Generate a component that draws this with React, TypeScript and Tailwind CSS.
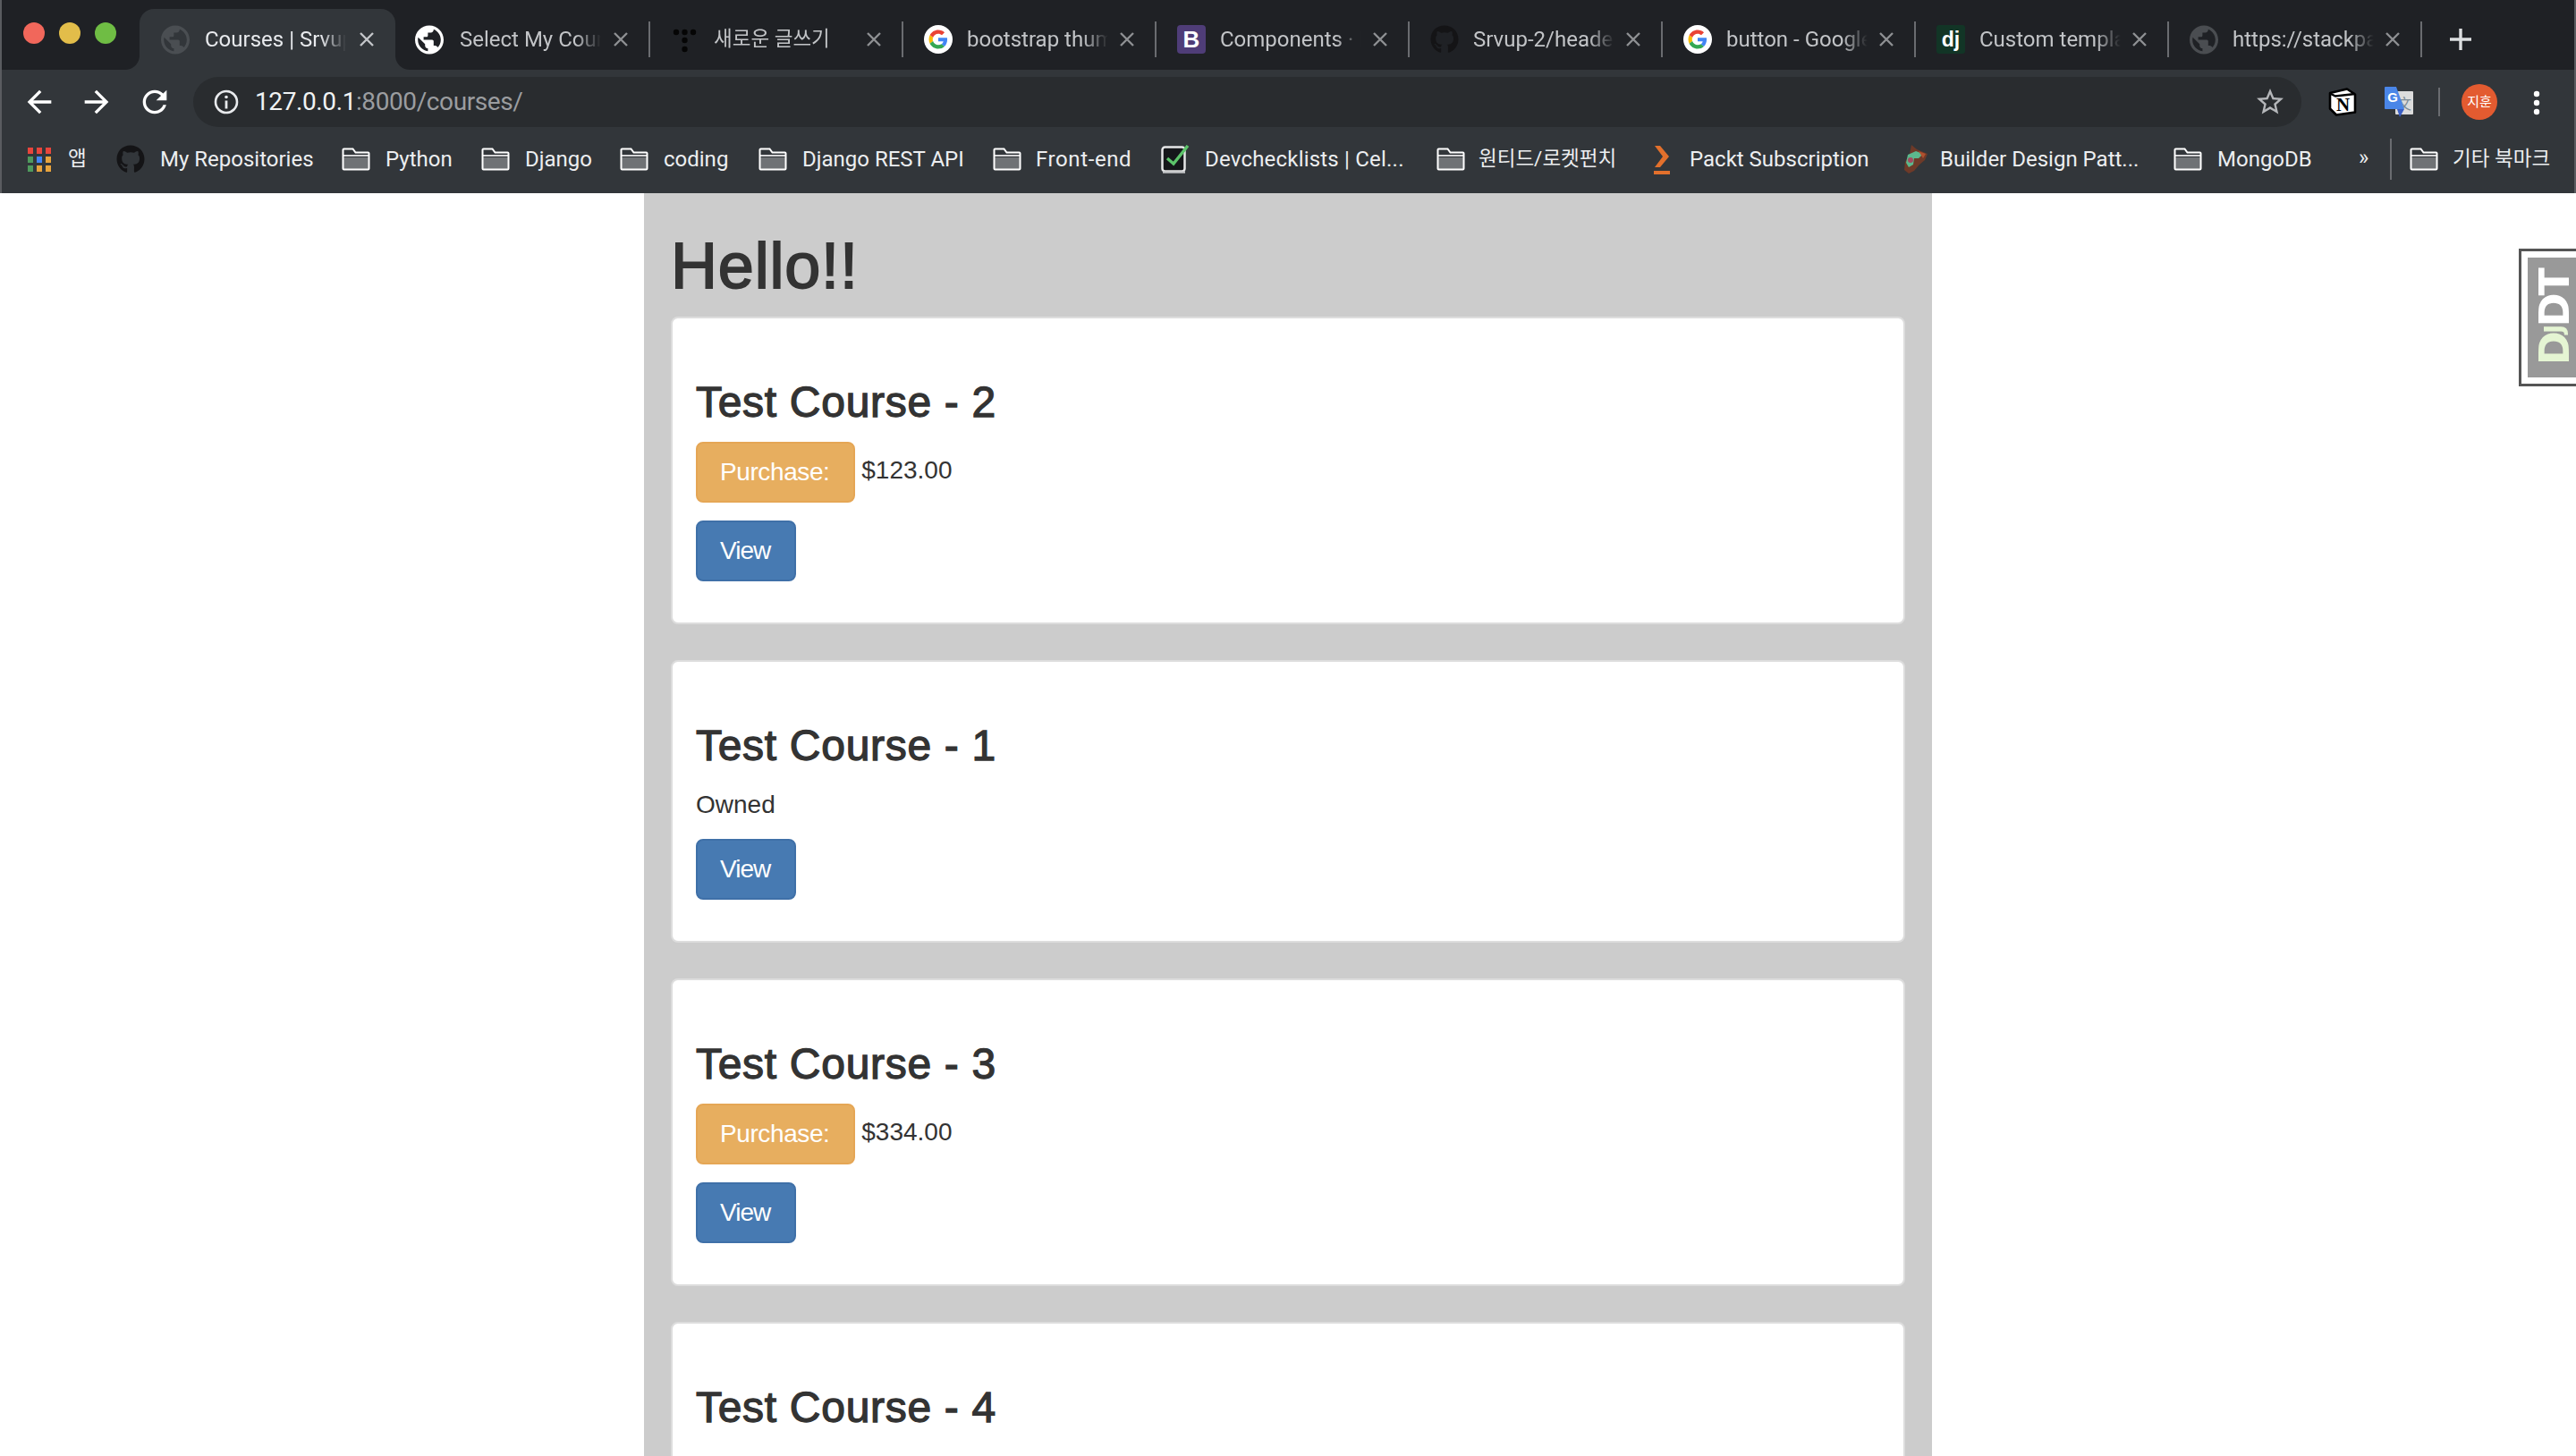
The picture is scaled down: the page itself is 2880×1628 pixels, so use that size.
import React from "react";
import { FaGithub } from "react-icons/fa";

const GLOBE =
  "M12 2C6.48 2 2 6.48 2 12s4.48 10 10 10 10-4.48 10-10S17.52 2 12 2zm-1 17.93c-3.95-.49-7-3.85-7-7.93 0-.62.08-1.21.21-1.79L9 15v1c0 1.1.9 2 2 2v1.93zm6.9-2.54c-.26-.81-1-1.39-1.9-1.39h-1v-3c0-.55-.45-1-1-1H8v-2h2c.55 0 1-.45 1-1V7h2c1.1 0 2-.9 2-2v-.41c2.93 1.19 5 4.06 5 7.41 0 2.08-.8 3.97-2.1 5.39z";

function Globe({ color }: { color: string }) {
  return (
    <svg width="33" height="33" viewBox="2 2 20 20" className="mx-auto">
      <path d={GLOBE} fill={color} />
    </svg>
  );
}

function GoogleIcon() {
  return (
    <svg width="32" height="32" viewBox="0 0 32 32">
      <circle cx="16" cy="16" r="16" fill="#fff" />
      <g transform="translate(5.5 5.5) scale(0.4375)">
        <path fill="#EA4335" d="M24 9.5c3.54 0 6.71 1.22 9.21 3.6l6.85-6.85C35.9 2.38 30.47 0 24 0 14.62 0 6.51 5.38 2.56 13.22l7.98 6.19C12.43 13.72 17.74 9.5 24 9.5z" />
        <path fill="#4285F4" d="M46.98 24.55c0-1.57-.15-3.09-.38-4.55H24v9.02h12.94c-.58 2.96-2.26 5.48-4.78 7.18l7.73 6c4.51-4.18 7.09-10.36 7.09-17.65z" />
        <path fill="#FBBC05" d="M10.53 28.59c-.5-1.45-.78-2.99-.78-4.59s.27-3.14.78-4.59l-7.98-6.19C.92 16.46 0 20.12 0 24c0 3.88.92 7.54 2.56 10.78l7.97-6.19z" />
        <path fill="#34A853" d="M24 48c6.48 0 11.93-2.13 15.89-5.81l-7.73-6c-2.15 1.45-4.92 2.3-8.16 2.3-6.26 0-11.57-4.22-13.47-9.91l-7.98 6.19C6.51 42.62 14.62 48 24 48z" />
      </g>
    </svg>
  );
}

function TistoryIcon() {
  return (
    <svg width="32" height="32" viewBox="0 0 32 32">
      <g fill="#050505">
        <circle cx="6" cy="8" r="3.2" />
        <circle cx="15.5" cy="8" r="3.2" />
        <circle cx="25" cy="8" r="3.2" />
        <circle cx="15.5" cy="17" r="3.2" />
        <circle cx="15.5" cy="27" r="3.2" />
      </g>
    </svg>
  );
}

const tabs: { title: string; size: string; pad: string; gap: string; closeGap: string; icon: React.ReactNode }[] = [
  { title: "Select My Courses", size: "text-[24px]", pad: "pl-[20px]", gap: "ml-[18px]", closeGap: "ml-[13px]", icon: <Globe color="#ffffff" /> },
  { title: "새로운 글쓰기", size: "text-[22.5px]", pad: "pl-[23px]", gap: "ml-4", closeGap: "ml-[12px]", icon: <TistoryIcon /> },
  { title: "bootstrap thumbnail", size: "text-[24px]", pad: "pl-[23px]", gap: "ml-4", closeGap: "ml-[12px]", icon: <GoogleIcon /> },
  {
    title: "Components · Bootstrap",
    size: "text-[24px]",
    pad: "pl-[23px]",
    gap: "ml-4",
    closeGap: "ml-[12px]",
    icon: (
      <div className="w-8 h-8 rounded-[4px] bg-[#4f3d78] flex items-center justify-center text-white text-[26px] leading-none font-bold [font-family:'Liberation_Sans',sans-serif]">
        B
      </div>
    ),
  },
  { title: "Srvup-2/headers.html", size: "text-[24px]", pad: "pl-[23px]", gap: "ml-4", closeGap: "ml-[12px]", icon: <FaGithub size={32} color="#141416" /> },
  { title: "button - Google 검색", size: "text-[24px]", pad: "pl-[23px]", gap: "ml-4", closeGap: "ml-[12px]", icon: <GoogleIcon /> },
  {
    title: "Custom template tags",
    size: "text-[24px]",
    pad: "pl-[23px]",
    gap: "ml-4",
    closeGap: "ml-[12px]",
    icon: (
      <div className="w-8 h-8 rounded-[3px] bg-[#123526] flex items-center justify-center text-white text-[23px] leading-none font-bold [font-family:'Liberation_Sans',sans-serif]">
        dj
      </div>
    ),
  },
  { title: "https://stackpath.bootstrapcdn", size: "text-[24px]", pad: "pl-[23px]", gap: "ml-4", closeGap: "ml-[12px]", icon: <Globe color="#4a4d51" /> },
];

function CloseX({ color }: { color: string }) {
  return (
    <svg width="18" height="18" viewBox="0 0 18 18" className="shrink-0">
      <path d="M2 2l14 14M16 2L2 16" stroke={color} strokeWidth="2.4" fill="none" />
    </svg>
  );
}

function Tab({ title, icon, size, pad, gap, closeGap }: { title: string; icon: React.ReactNode; size: string; pad: string; gap: string; closeGap: string }) {
  return (
    <div className={`${pad} flex items-center h-[68px] w-[283px] shrink-0`}>
      <div className="w-8 h-8 shrink-0 flex items-center justify-center">{icon}</div>
      <div className={`${size} ${gap} w-[158px] text-[#c2c4c7] whitespace-nowrap overflow-hidden [mask-image:linear-gradient(to_right,#000_82%,transparent)]`}>
        {title}
      </div>
      <div className={closeGap}>
        <CloseX color="#8e9093" />
      </div>
      <div className="ml-auto w-[2px] h-10 bg-[#6a6c70]" />
    </div>
  );
}

function ActiveTab() {
  return (
    <div className="relative flex items-center h-[68px] w-[286px] shrink-0 pl-[24px] bg-[#32363a] rounded-t-[16px]">
      <div className="absolute bottom-0 -left-4 w-4 h-4 bg-[radial-gradient(circle_at_0_0,#1f2125_15.5px,#32363a_16.5px)]" />
      <div className="absolute bottom-0 -right-4 w-4 h-4 bg-[radial-gradient(circle_at_100%_0,#1f2125_15.5px,#32363a_16.5px)]" />
      <div className="w-8 h-8 shrink-0 flex items-center justify-center">
        <Globe color="#4a4e52" />
      </div>
      <div className="w-[158px] ml-[17px] text-[24px] text-[#e8eaed] whitespace-nowrap overflow-hidden [mask-image:linear-gradient(to_right,#000_82%,transparent)]">
        Courses | Srvup
      </div>
      <div className="ml-[14px]">
        <CloseX color="#c4c6c9" />
      </div>
    </div>
  );
}

function Folder() {
  return (
    <svg width="32" height="26" viewBox="0 0 32 26" className="shrink-0">
      <rect x="2" y="11" width="28" height="13" fill="#6f7275" />
      <path d="M2.5 1.5h10l3 4h14a1 1 0 0 1 1 1v17a1 1 0 0 1-1 1h-27a1 1 0 0 1-1-1v-21a1 1 0 0 1 1-1z" fill="none" stroke="#fff" strokeWidth="2" />
      <path d="M2 9h28" stroke="#fff" strokeWidth="1.6" />
    </svg>
  );
}

function AppsGrid() {
  const cells = ["#e8453c", "#e8453c", "#e8453c", "#4f9a5d", "#4285f4", "#e8a33d", "#4f9a5d", "#e8a33d", "#e8a33d"];
  return (
    <svg width="26" height="27" viewBox="0 0 26 27" className="shrink-0">
      {cells.map((c, i) => (
        <rect key={i} x={(i % 3) * 10} y={Math.floor(i / 3) * 10} width="6" height="7" fill={c} />
      ))}
    </svg>
  );
}

function CheckIcon() {
  return (
    <svg width="32" height="32" viewBox="0 0 32 32" className="shrink-0">
      <rect x="1.5" y="2.5" width="25" height="27" rx="3" fill="#15171a" stroke="#e6e7e8" strokeWidth="2.5" />
      <path d="M2 30.5h25" stroke="#c4c6c8" strokeWidth="2.4" />
      <path d="M7 15l7 6L30 1" fill="none" stroke="#5cc46a" strokeWidth="3.4" />
    </svg>
  );
}

function PacktIcon() {
  return (
    <svg width="18" height="33" viewBox="0 0 18 33" className="shrink-0">
      <path d="M1 1h6l10 12-10 12H1l9-12z" fill="#e2702c" />
      <rect x="0" y="29" width="18" height="4" fill="#e2702c" />
    </svg>
  );
}

function GuruIcon() {
  return (
    <svg width="30" height="32" viewBox="0 0 30 32" className="shrink-0">
      <path d="M12 0l6 5 12 5-3 7-6 5-6 7-6 3-5-4 1-9 5-9z" fill="#6e3a28" />
      <path d="M8 11l9-4 8 3-5 5-5 0-1 7-5 3-3-5z" fill="#5cb88c" />
      <circle cx="11" cy="17" r="3" fill="#a5495f" />
      <path d="M20 7l8 3-3 5z" fill="#b0502e" />
    </svg>
  );
}

const marks: { w: string; ml: string; label: string; text?: string; icon: React.ReactNode }[] = [
  { w: "w-[252px]", ml: "ml-[17px]", label: "My Repositories", icon: <FaGithub size={32} color="#141416" className="shrink-0" /> },
  { w: "w-[156px]", ml: "ml-[17px]", label: "Python", icon: <Folder /> },
  { w: "w-[155px]", ml: "ml-[17px]", label: "Django", icon: <Folder /> },
  { w: "w-[155px]", ml: "ml-[17px]", label: "coding", icon: <Folder /> },
  { w: "w-[262px]", ml: "ml-[17px]", label: "Django REST API", icon: <Folder /> },
  { w: "w-[188px]", ml: "ml-[16px]", label: "Front-end", text: "tracking-[0.6px]", icon: <Folder /> },
  { w: "w-[308px]", ml: "ml-[17px]", label: "Devchecklists | Cel...", text: "tracking-[0.2px]", icon: <CheckIcon /> },
  { w: "w-[243px]", ml: "ml-[15px]", label: "원티드/로켓펀치", text: "text-[22.5px]", icon: <Folder /> },
  { w: "w-[276px]", ml: "ml-[22px]", label: "Packt Subscription", icon: <PacktIcon /> },
  { w: "w-[305px]", ml: "ml-[14px]", label: "Builder Design Patt...", icon: <GuruIcon /> },
  { w: "w-[207px]", ml: "ml-[17px]", label: "MongoDB", icon: <Folder /> },
];

function Chrome() {
  return (
    <div className="border-x-2 border-[#5a5c60] [font-family:Roboto,'Noto_Sans_CJK_KR',sans-serif]">
      {/* tab strip */}
      <div className="h-[78px] bg-[#1f2125] flex items-end pl-6">
        <div className="self-start mt-[25px] flex gap-4 shrink-0 w-[130px]">
          <div className="w-6 h-6 rounded-full bg-[#f1675b]" />
          <div className="w-6 h-6 rounded-full bg-[#e2bd4a]" />
          <div className="w-6 h-6 rounded-full bg-[#6fbd44]" />
        </div>
        <ActiveTab />
        <div className="w-[2px] shrink-0" />
        {tabs.map((t) => (
          <Tab key={t.title} title={t.title} icon={t.icon} size={t.size} pad={t.pad} gap={t.gap} closeGap={t.closeGap} />
        ))}
        <svg width="24" height="24" viewBox="0 0 24 24" className="ml-[31px] mb-[22px] shrink-0">
          <path d="M12 0v24M0 12h24" stroke="#dcdee0" strokeWidth="3.4" />
        </svg>
      </div>

      {/* toolbar */}
      <div className="h-[64px] bg-[#32363a] flex items-start pt-2 pl-[22px]">
        <svg width="40" height="40" viewBox="0 0 24 24" className="mt-2 shrink-0">
          <path fill="#fff" d="M20 11H7.83l5.59-5.59L12 4l-8 8 8 8 1.41-1.41L7.83 13H20v-2z" />
        </svg>
        <svg width="40" height="40" viewBox="0 0 24 24" className="mt-2 ml-6 shrink-0">
          <path fill="#fff" d="M12 4l-1.41 1.41L16.17 11H4v2h12.17l-5.58 5.59L12 20l8-8z" />
        </svg>
        <svg width="40" height="40" viewBox="0 0 24 24" className="mt-2 ml-[25px] shrink-0">
          <path fill="#fff" d="M17.65 6.35C16.2 4.9 14.21 4 12 4c-4.42 0-7.99 3.58-7.99 8s3.57 8 7.99 8c3.73 0 6.84-2.55 7.73-6h-2.08c-.82 2.33-3.04 4-5.65 4-3.31 0-6-2.69-6-6s2.69-6 6-6c1.66 0 3.14.69 4.22 1.78L13 11h7V4l-2.35 2.35z" />
        </svg>
        <div className="ml-[23px] w-[2357px] h-[56px] rounded-full bg-[#292c2f] flex items-center pl-[23px] pr-[17px] shrink-0">
          <svg width="28" height="28" viewBox="0 0 28 28" className="shrink-0">
            <circle cx="14" cy="14" r="12" fill="none" stroke="#e8eaed" strokeWidth="2.6" />
            <circle cx="14" cy="8.5" r="1.8" fill="#e8eaed" />
            <path d="M14 12.5v9" stroke="#e8eaed" strokeWidth="2.8" />
          </svg>
          <div className="ml-[18px] text-[28px] tracking-[-0.4px] text-[#9b9da0] whitespace-nowrap">
            <span className="text-[#f1f3f4]">127.0.0.1</span>:8000/courses/
          </div>
          <svg width="36" height="36" viewBox="0 0 24 24" className="ml-auto shrink-0">
            <path fill="#b5b7ba" d="M22 9.24l-7.19-.62L12 2 9.19 8.63 2 9.24l5.46 4.73L5.82 21 12 17.27 18.18 21l-1.63-7.03L22 9.24zM12 15.4l-3.76 2.27 1-4.28-3.32-2.88 4.38-.38L12 6.1l1.71 4.04 4.38.38-3.32 2.88 1 4.28L12 15.4z" />
          </svg>
        </div>

        {/* Notion */}
        <svg width="32" height="32" viewBox="0 0 32 32" className="ml-[30px] mt-3 shrink-0">
          <path d="M2 6l19-4.5 9 6v20l-21 3-7-7z" fill="#fff" stroke="#000" strokeWidth="2.6" strokeLinejoin="round" />
          <path d="M3 7l5 2.5L30 7" fill="none" stroke="#000" strokeWidth="2.4" />
          <text x="16.5" y="26" textAnchor="middle" fontSize="21" fontWeight="700" fontFamily="'Liberation Serif', serif" fill="#000">N</text>
        </svg>
        {/* Translate */}
        <svg width="32" height="34" viewBox="0 0 32 34" className="ml-[31px] mt-[11px] shrink-0">
          <rect x="12" y="5" width="20" height="26" rx="1" fill="#dcdcdc" />
          <text x="22" y="25" textAnchor="middle" fontSize="16" fontFamily="'Noto Sans CJK SC', sans-serif" fill="#7b8a94">文</text>
          <path d="M0 1a1 1 0 0 1 1-1h12l9 25H1a1 1 0 0 1-1-1z" fill="#4a86e8" />
          <path d="M14 25h8l-5 9z" fill="#3b5fc4" />
          <text x="9" y="17" textAnchor="middle" fontSize="15" fontWeight="700" fontFamily="'Liberation Sans', sans-serif" fill="#fff">G</text>
        </svg>
        <div className="ml-[28px] mt-3 w-[2px] h-8 bg-[#6a6c70] shrink-0" />
        <div className="ml-[24px] mt-2 w-10 h-10 rounded-full bg-[#e35b30] flex items-center justify-center text-white text-[15px] leading-none shrink-0 whitespace-nowrap">
          지훈
        </div>
        <svg width="8" height="30" viewBox="0 0 8 30" className="ml-[40px] mt-[15px] shrink-0">
          <circle cx="4" cy="4" r="3.2" fill="#fff" />
          <circle cx="4" cy="14" r="3.2" fill="#fff" />
          <circle cx="4" cy="24" r="3.2" fill="#fff" />
        </svg>
      </div>

      {/* bookmarks */}
      <div className="h-[74px] bg-[#32363a] flex items-center pl-[29px] pb-[2px] text-[24px] text-[#eceef0] whitespace-nowrap">
        <div className="w-[99px] shrink-0 flex items-center">
          <AppsGrid />
          <span className="ml-[19px] text-[22.5px]">앱</span>
        </div>
        {marks.map((m) => (
          <div key={m.label} className={`${m.w} shrink-0 flex items-center`}>
            {m.icon}
            <span className={`${m.ml} ${m.text ?? ""}`}>{m.label}</span>
          </div>
        ))}
        <div className="w-[35px] shrink-0 pb-1">»</div>
        <div className="w-[2px] h-[46px] bg-[#6a6c70] shrink-0" />
        <div className="ml-5 shrink-0 flex items-center">
          <Folder />
          <span className="ml-4 text-[22.5px]">기타 북마크</span>
        </div>
      </div>
    </div>
  );
}

function Btn({ kind, children }: { kind: "warn" | "primary"; children: React.ReactNode }) {
  return (
    <a
      className={
        kind === "warn"
          ? "inline-block align-middle text-white bg-[#e7ae5f] border-2 border-[#e5a655] rounded-[8px] pl-[25px] pr-[27px] py-3 leading-[40px] tracking-[-0.4px]"
          : "inline-block align-middle text-white bg-[#477ab2] border-2 border-[#3f70a8] rounded-[8px] pl-[25px] pr-[27px] py-3 leading-[40px] tracking-[-1px]"
      }
    >
      {children}
    </a>
  );
}

function CourseCard({ title, price }: { title: string; price?: string }) {
  return (
    <div className="bg-white border-2 border-[#dddddd] rounded-[8px] p-[26px] mb-10">
      <h3 className="mt-[42px] mb-[18px] text-[48px] leading-[52px] text-[#333] tracking-[0.7px] [-webkit-text-stroke:1.3px_#333]">{title}</h3>
      {price ? (
        <div className="mb-5 h-[68px] leading-[40px]">
          <Btn kind="warn">Purchase:</Btn> <span className="-ml-[1px]">{price}</span>
        </div>
      ) : (
        <div className="mb-5 h-[40px] leading-[43px]">Owned</div>
      )}
      <div className="mb-5 h-[68px] leading-[40px]">
        <Btn kind="primary">View</Btn>
      </div>
    </div>
  );
}

export default function App() {
  return (
    <div className="relative w-[2880px] h-[1628px] overflow-hidden bg-white">
      <Chrome />
      <div className="w-[1440px] mx-auto bg-[#cccccc] px-[30px] h-[1412px] [font-family:'Liberation_Sans',Arial,sans-serif] text-[28px] text-[#333]">
        <h1 className="pt-[42px] mb-[17px] text-[72px] leading-[79px] tracking-[0.8px] text-[#333] [-webkit-text-stroke:1.8px_#333]">Hello!!</h1>
        <CourseCard title="Test Course - 2" price="$123.00" />
        <CourseCard title="Test Course - 1" />
        <CourseCard title="Test Course - 3" price="$334.00" />
        <CourseCard title="Test Course - 4" />
      </div>
      {/* debug toolbar handle */}
      <div className="absolute right-0 top-[278px] w-[64px] h-[154px] bg-white border-y-[3px] border-l-[3px] border-[#555] pl-[7px] py-[7px]">
        <div className="h-full bg-[#999] flex items-center justify-center pl-[5px]">
          <div className="[writing-mode:vertical-rl] rotate-180 text-[46px] leading-none font-bold tracking-[-3px] text-white [font-family:'DejaVu_Sans',sans-serif] blur-[0.6px]">
            <span className="text-[#e5f5d3]">D<span className="text-[28px]">J</span></span>DT
          </div>
        </div>
      </div>
    </div>
  );
}
